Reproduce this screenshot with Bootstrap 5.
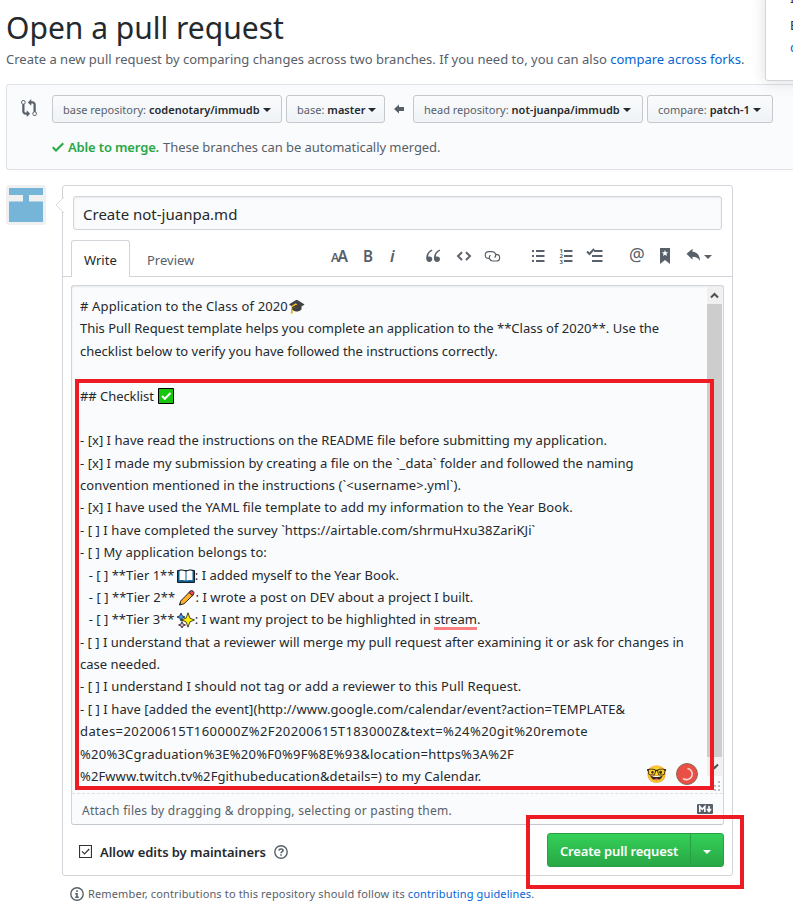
<!doctype html>
<html lang="en">
<head>
<meta charset="utf-8">
<meta name="viewport" content="width=device-width, initial-scale=1">
<title>Open a pull request</title>
<link href="https://cdn.jsdelivr.net/npm/bootstrap@5.3.0/dist/css/bootstrap.min.css" rel="stylesheet">
<style>
body{font-family:"Noto Sans","Open Sans",sans-serif;font-size:13px;line-height:20px;color:#24292e;background:#fff;overflow:hidden}
svg{display:block;flex:none;fill:currentColor}
a{color:#0366d6;text-decoration:none}
.page-wrap{height:922px;overflow:hidden;padding-left:6px}
.gray{color:#586069}
.page-title{font-size:30px;line-height:40px;font-weight:400;margin:0;padding-top:8px}
.subtitle{padding-top:1px;letter-spacing:.01px}
.range{margin-top:15px;height:86px;border:1px solid #dfe2e8;border-right:0;border-radius:3px 0 0 3px;background:#fafbfc;padding:10px 0 0 14px}
.range .btn{font-size:11px;line-height:16px;height:28px;padding:6px 10px 4px;color:#586069;border:1px solid #c5c9cd;border-radius:3px;background:linear-gradient(#fafbfc,#eff3f6);white-space:nowrap;display:flex;align-items:center}
.range b,.semi{font-weight:600}
.range b{color:#24292e;margin-left:3px}
.caret{width:0;height:0;border:4px solid transparent;border-top-color:currentColor;border-bottom:0;display:inline-block;flex:none}
.range .caret{color:#24292e;margin-left:3px}
.w-a{width:230px}.w-b{width:99px}.w-c{width:126px}
.pickers{margin-left:15px}
.merge-line{padding:14px 0 0 31px}
.green{color:#28a745}
.form-row{padding-top:15px}
.avatar-box{width:40px;height:40px;background:#f0f0f0;border-radius:3px;padding:3px}
.compose{position:relative;width:671px;height:691px;margin-left:16px;border:1px solid #d1d5da;border-radius:3px}
.notch{position:absolute;left:-8px;top:11px}
.title-input{font-size:15px;line-height:22px;height:34px;width:649px;margin:10px 0 0 10px;padding:6px 9px;border:1px solid #d1d5da;border-radius:3px;background:#fafbfc;color:#24292e;box-shadow:inset 0 1px 2px rgba(27,31,35,.08)}
.tabrow{height:37px;margin-top:10px;padding-left:8px;border-bottom:1px solid #d1d5da}
.tabrow .nav-link{font-size:13px;line-height:20px;height:37px;padding:10px 0 0 17px;color:#586069}
.tabrow .nav-link.active{height:37px;width:59px;border:1px solid #d1d5da;border-bottom:0;border-radius:3px 3px 0 0;background:#fff;color:#24292e;padding:9px 0 0 12px}
.tools{margin-left:auto;margin-right:9px;color:#586069}
.editor{width:653px;height:540px;margin:8px 0 0 8px;border:1px solid #d1d5da;border-bottom-color:#c3c8cf;border-radius:3px;background:#fafbfc}
.text-zone{height:508px;border-bottom:1px dashed #dfe2e5;box-shadow:inset 0 1px 2px rgba(27,31,35,.08)}
.md{padding:9px 0 0 8px;line-height:22.38px;flex:1 1 0;min-width:0}
.md div{height:22.38px;white-space:pre}
.md svg{display:inline-block;vertical-align:-4px}
.md .tick{vertical-align:-3px;margin-left:1px}
.md .tier{padding-left:2px}
.md .tier svg{margin:0 0 0 -1px}
.s0{letter-spacing:.04px}.s1{letter-spacing:.08px}.s2{letter-spacing:.1px}.s3{letter-spacing:.14px}.s4{letter-spacing:.24px}.s5{letter-spacing:.41px}
.sn{letter-spacing:-.06px}.sb{letter-spacing:-.15px}
.emo{font-family:"Noto Color Emoji",sans-serif;font-size:14px;letter-spacing:0}
.misspelt{box-shadow:0 3px 0 #ff8080;display:inline-block;line-height:16px;height:16px}
.bar-col{width:16px;padding-right:1px}
.bar-track{height:489px;margin-top:1px;background:#f0f0f0;color:#505050}
.bar-thumb{height:453px;background:#cdcdcd}
.face{position:absolute;left:583px;top:578px;font-size:17px;line-height:20px}
.spin{position:absolute;left:613px;top:577px}
.attach{font-size:12px;letter-spacing:.26px;color:#586069;height:31px;padding:3px 10px 0}
.attach svg{margin-bottom:5px}
.save-row{height:34px;margin-top:8px;padding:0 8px 0 16px}
.save-row .box{margin-top:2px}
.go .btn{height:34px;font-size:13px;font-weight:600;line-height:20px;color:#fff;border:1px solid #279f43;background:linear-gradient(#34d058,#28a745);border-radius:3px;padding:6px 0 4px;letter-spacing:-.15px}
.go .go-main{width:144px;border-radius:3px 0 0 3px}
.go .go-more{width:34px;border-radius:0 3px 3px 0;margin-left:-1px;padding:4px 0 0;display:flex;align-items:center;justify-content:center}
.note{font-size:11px;line-height:16px;letter-spacing:.14px;padding:10px 0 0 64px}
.redbox{position:absolute;border:4px solid #ed1c24;pointer-events:none}
.r1{left:75px;top:379px;width:639px;height:411px}
.r2{left:526px;top:815px;width:218px;height:74px}
.pop{position:absolute;left:765px;top:-10px;width:60px;height:91px;background:#fff;border:1px solid #d1d5da;border-radius:3px;box-shadow:0 1px 15px rgba(27,31,35,.15);padding:0 0 0 24px;line-height:22px}
.pop .p0{color:#4b2a63;height:23px;line-height:15px}
</style>
<script src="https://cdn.jsdelivr.net/npm/bootstrap@5.3.0/dist/js/bootstrap.bundle.min.js"></script>
</head>
<body>
<main class="page-wrap position-relative">
  <h1 class="page-title">Open a pull request</h1>
  <div class="subtitle gray">Create a new pull request by comparing changes across two branches. If you need to, you can also <a href="#">compare across forks</a>.</div>

  <section class="range">
    <div class="d-flex align-items-start">
      <svg class="gray mt-1" width="16" height="18" viewBox="0 0 14 16"><path fill-rule="evenodd" d="M5 12H4c-.27-.02-.48-.11-.69-.31-.21-.2-.3-.42-.31-.69V4.720A1.993 1.993 0 0 0 2 1a1.993 1.993 0 0 0-1 3.720V11c.03.78.34 1.470.94 2.060.6.590 1.280.910 2.060.940h1v2l3-3-3-3v2zM2 1.800c.66 0 1.200.55 1.200 1.200 0 .65-.55 1.200-1.200 1.200C1.350 4.200.8 3.650.8 3c0-.65.55-1.200 1.200-1.200zm11 9.480V5c-.03-.78-.34-1.470-.94-2.060-.6-.59-1.280-.91-2.060-.94H9V0L6 3l3 3V4h1c.27.02.48.11.69.31.21.2.3.42.31.69v6.280A1.993 1.993 0 0 0 12 15a1.993 1.993 0 0 0 1-3.720zm-1 2.920c-.66 0-1.200-.55-1.200-1.200 0-.65.55-1.200 1.200-1.200.65 0 1.200.55 1.200 1.200 0 .65-.55 1.200-1.200 1.200z"/></svg>
      <div class="d-flex align-items-center pickers">
        <button class="btn w-a">base repository: <b>codenotary/immudb</b><span class="caret"></span></button>
        <button class="btn w-b ms-1">base: <b>master</b><span class="caret"></span></button>
        <svg class="gray mx-2" width="12" height="12" viewBox="0 0 12 12"><path d="M1 6l5-4.500V4h5v4H6v2.500z"/></svg>
        <button class="btn w-a">head repository: <b>not-juanpa/immudb</b><span class="caret"></span></button>
        <button class="btn w-c ms-1">compare: <b>patch-1</b><span class="caret"></span></button>
      </div>
    </div>
    <div class="d-flex align-items-center gray merge-line">
      <svg class="green" width="12" height="16" viewBox="0 0 12 16"><path d="M12 5l-8 8-4-4 1.500-1.500L4 10l6.500-6.500z"/></svg>
      <span class="green semi sb ms-1">Able to merge.</span><span class="sn ms-1">These branches can be automatically merged.</span>
    </div>
  </section>

  <div class="d-flex align-items-start form-row">
    <div class="avatar-box"><svg width="34" height="34" viewBox="0 0 34 34"><path fill="#76b5d8" d="M0 0h34v7H20v6.500h14V34H0V13.500h14V7H0z"/></svg></div>
    <section class="compose">
      <svg class="notch" width="9" height="16" viewBox="0 0 9 16"><path d="M9 0L1 8l8 8" fill="#fff" stroke="#d8dbe0"/></svg>
      <div class="title-input">Create not-juanpa.md</div>
      <div class="tabrow d-flex">
        <div class="nav flex-nowrap"><a class="nav-link active" href="#">Write</a><a class="nav-link" href="#">Preview</a></div>
        <svg class="tools" width="400" height="34" viewBox="323 240 400 34">
          <g font-family="Noto Sans" font-weight="600"><text x="331" y="262" font-size="12">A</text><text x="337.500" y="262" font-size="16" textLength="10.500" lengthAdjust="spacingAndGlyphs">A</text><text x="363" y="262" font-size="16" textLength="10" lengthAdjust="spacingAndGlyphs">B</text><text x="390" y="262" font-size="16" font-style="italic">i</text></g>
          <path d="M432.500 250.800c-3 1.400-4.300 3.300-4.300 6 .4-.3.900-.4 1.500-.4 1.500 0 2.600 1.100 2.600 2.700 0 1.700-1.200 2.900-2.900 2.900-2 0-3.200-1.600-3.200-4 0-3.900 1.900-6.700 5.600-8.400zM440.200 250.800c-3 1.400-4.300 3.300-4.300 6 .4-.3.900-.4 1.500-.4 1.500 0 2.600 1.100 2.600 2.700 0 1.700-1.200 2.900-2.900 2.900-2 0-3.200-1.600-3.200-4 0-3.900 1.900-6.700 5.600-8.400z"/>
          <path d="M462 252.200l-4 3.900 4 3.900M466 252.200l4 3.900-4 3.900" fill="none" stroke="currentColor" stroke-width="2"/>
          <path d="M489.500 258.500h-.8a3.400 3.400 0 0 1 0-6.900h3.600a3.400 3.400 0 0 1 2.300 5.900M495.500 254.300h.8a3.300 3.300 0 0 1 0 6.700h-3.600a3.400 3.400 0 0 1-2.300-5.900" fill="none" stroke="currentColor" stroke-width="1.200"/>
          <path d="M532 250h2v2h-2zM536 250h8.500v2H536zM532 255h2v2h-2zM536 255h8.500v2H536zM532 260h2v2h-2zM536 260h8.500v2H536zM564 250h8.500v2H564zM564 255h8.500v2H564zM564 260h8.500v2H564zM594 250h8.500v2H594zM592 255h10.500v2H592zM592 260h10.500v2H592z"/>
          <g font-family="Noto Sans" font-weight="700" font-size="6"><text x="559.500" y="253">1</text><text x="559.500" y="258.300">2</text><text x="559.500" y="263.600">3</text></g>
          <path d="M587 251.500l2.500 2.500 4.500-5" fill="none" stroke="currentColor" stroke-width="2"/>
          <text x="629" y="261" font-family="Noto Sans" font-size="17.500">@</text>
          <path fill-rule="evenodd" d="M660 248h10v16l-5-4-5 4zM665 250l-.9 2.200-2.400.1 1.900 1.500-.7 2.300 2.100-1.300 2.100 1.300-.7-2.300 1.900-1.500-2.400-.1z"/>
          <path d="M686.500 253.800l6-5v3c4.500.2 7.300 3.300 7.500 9.200-1.700-3-4-4.200-7.500-4.200v3zM704 255h8l-4 4z"/>
        </svg>
      </div>

      <div class="editor">
        <div class="text-zone d-flex">
          <div class="md">
            <div class="s3"># Application to the Class of 2020<span class="emo">🎓</span></div>
            <div>This Pull Request template helps you complete an application to the **Class of 2020**. Use the</div>
            <div>checklist below to verify you have followed the instructions correctly.</div>
            <div></div>
            <div class="sn">## Checklist <svg class="tick" width="16" height="16" viewBox="0 0 16 16"><path fill="#16c60c" stroke="#000" d="M.5.5h15v15H.5z"/><path d="M4 8l2.800 2.800L12.500 5" fill="none" stroke="#fff" stroke-width="2"/></svg></div>
            <div></div>
            <div class="s0">- [x] I have read the instructions on the README file before submitting my application.</div>
            <div class="s0">- [x] I made my submission by creating a file on the `_data` folder and followed the naming</div>
            <div class="s1">convention mentioned in the instructions (`&lt;username&gt;.yml`).</div>
            <div class="s2">- [x] I have used the YAML file template to add my information to the Year Book.</div>
            <div class="s1">- [ ] I have completed the survey `https://airtable.com/shrmuHxu38ZariKJi`</div>
            <div class="s2">- [ ] My application belongs to:</div>
            <div class="tier">  - [ ] **Tier 1** <svg width="18" height="16" viewBox="0 0 18 16"><path fill="#0b5a8a" stroke="#10222e" d="M.5 2.500h17v12H.5z"/><path fill="#fff" d="M2.500 2.500q3.500-1 6 .5v9.500q-2.500-1-6-.3zM9.500 3q3-1.500 6-.5v9.700q-3.500-.7-6 .3z"/><path stroke="#10222e" fill="none" d="M1 2.500q4-1.500 8 .5 4-2 8-.5"/></svg>: I added myself to the Year Book.</div>
            <div class="tier s0">  - [ ] **Tier 2** <svg width="18" height="16" viewBox="0 0 18 16"><path fill="#ffb02e" stroke="#2b2118" d="M1.500 15l1.200-4L12 1.500l3.500 3.200L6 13.800z"/><path fill="#e8485c" stroke="#2b2118" d="M11 2.500l1.500-1.700q1.200-.7 2.500.4 1.500 1.400.6 2.900L14.300 5.600z"/><path d="M1.200 15.300l.8-2.500 1.700 1.700z"/></svg>: I wrote a post on DEV about a project I built.</div>
            <div class="tier">  - [ ] **Tier 3** <svg width="18" height="16" viewBox="0 0 18 16" stroke="#1c1c1c" stroke-width=".8"><path fill="#3aa0f0" d="M4 1l1.200 2.800L8 5 5.200 6.200 4 9 2.800 6.200 0 5l2.800-1.200z"/><path fill="#e8a0c8" d="M5 9.500l1 2.500 2.500 1L6 14l-1 2-1-2-2.500-1L4 12z"/><path fill="#fff100" d="M11 .8l1.900 5.300L17.500 8l-4.600 1.900L11 15.200 9.100 9.900 4.500 8l4.600-1.900z"/></svg>: I want my project to be highlighted in <span class="misspelt">stream</span>.</div>
            <div>- [ ] I understand that a reviewer will merge my pull request after examining it or ask for changes in</div>
            <div>case needed.</div>
            <div class="s1">- [ ] I understand I should not tag or add a reviewer to this Pull Request.</div>
            <div class="s1">- [ ] I have [added the event](http://www.google.com/calendar/event?action=TEMPLATE&amp;</div>
            <div class="s5">dates=20200615T160000Z%2F20200615T183000Z&amp;text=%24%20git%20remote</div>
            <div class="s4">%20%3Cgraduation%3E%20%F0%9F%8E%93&amp;location=https%3A%2F</div>
            <div class="s2">%2Fwww.twitch.tv%2Fgithubeducation&amp;details=) to my Calendar.</div>
          </div>
          <div class="bar-col">
            <div class="bar-track">
              <svg width="15" height="17" viewBox="0 0 15 17"><path d="M4 10.500L7.500 7l3.500 3.500" fill="none" stroke="currentColor" stroke-width="2"/></svg>
              <div class="bar-thumb"></div>
              <svg width="15" height="19" viewBox="0 0 15 19"><path d="M4 7.500L7.500 11 11 7.500" fill="none" stroke="currentColor" stroke-width="2"/></svg>
            </div>
            <svg width="15" height="16" viewBox="0 0 15 16"><path fill="#bfbfbf" d="M11 5h2v2h-2zM11 9h2v2h-2zM7 9h2v2H7zM11 13h2v2h-2zM7 13h2v2H7z"/></svg>
          </div>
        </div>
        <div class="attach d-flex align-items-center justify-content-between"><span>Attach files by dragging &amp; dropping, selecting or pasting them.</span>
          <svg width="16" height="10" viewBox="0 0 16 10"><rect width="16" height="10" rx="1" fill="#586069"/><path d="M2.800 8V2.500L5.300 5.300 7.800 2.500V8M12 2v5M10 5l2 2.500L14 5" fill="none" stroke="#fff" stroke-width="1.600"/></svg></div>
      </div>

      <div class="save-row d-flex align-items-center">
        <svg class="box" width="13" height="13" viewBox="0 0 13 13"><path d="M.5.5h12v12H.5zM3 6.300l2.500 2.500L10.300 4" fill="#fff" stroke="#333" stroke-width="1.200"/></svg>
        <span class="semi sn ms-2 pt-1">Allow edits by maintainers</span>
        <svg class="gray ms-2 mt-1" width="14" height="14" viewBox="0 0 14 14"><circle cx="7" cy="7" r="6.200" fill="none" stroke="currentColor" stroke-width="1.400"/><path d="M4.900 5.600C5 4.400 5.800 3.900 7 3.900s2.100.6 2.100 1.600C9.100 6.800 7 6.700 7 8.300M7 9.300v1.500" fill="none" stroke="currentColor" stroke-width="1.500"/></svg>
        <div class="go btn-group ms-auto"><button class="btn go-main">Create pull request</button><button class="btn go-more" aria-label="More"><span class="caret"></span></button></div>
      </div>
      <div class="face emo">🤓</div>
      <svg class="spin" width="22" height="22" viewBox="0 0 22 22"><circle cx="11" cy="11" r="10.500" fill="#e94f45" stroke="#8a6a55"/><path d="M11.500 5.500a5.600 5.600 0 1 1-4.500 9.800" fill="none" stroke="#fbd5d2" stroke-width="1.600"/></svg>
    </section>
  </div>

  <div class="note gray d-flex align-items-center">
    <svg width="14" height="14" viewBox="0 0 14 14"><circle cx="7" cy="7" r="6.200" fill="none" stroke="currentColor" stroke-width="1.400"/><path d="M6.200 3.300h1.600v1.600H6.200zM5.200 6h2.600v3.500h1V11H5.200V9.500h1v-2h-1z"/></svg>
    <span class="ms-1">Remember, contributions to this repository should follow its <a href="#">contributing guidelines</a>.</span>
  </div>

  <aside class="pop"><div class="p0">I</div><div>B</div><a href="#">c</a></aside>
  <div class="redbox r1"></div>
  <div class="redbox r2"></div>
</main>
</body>
</html>
